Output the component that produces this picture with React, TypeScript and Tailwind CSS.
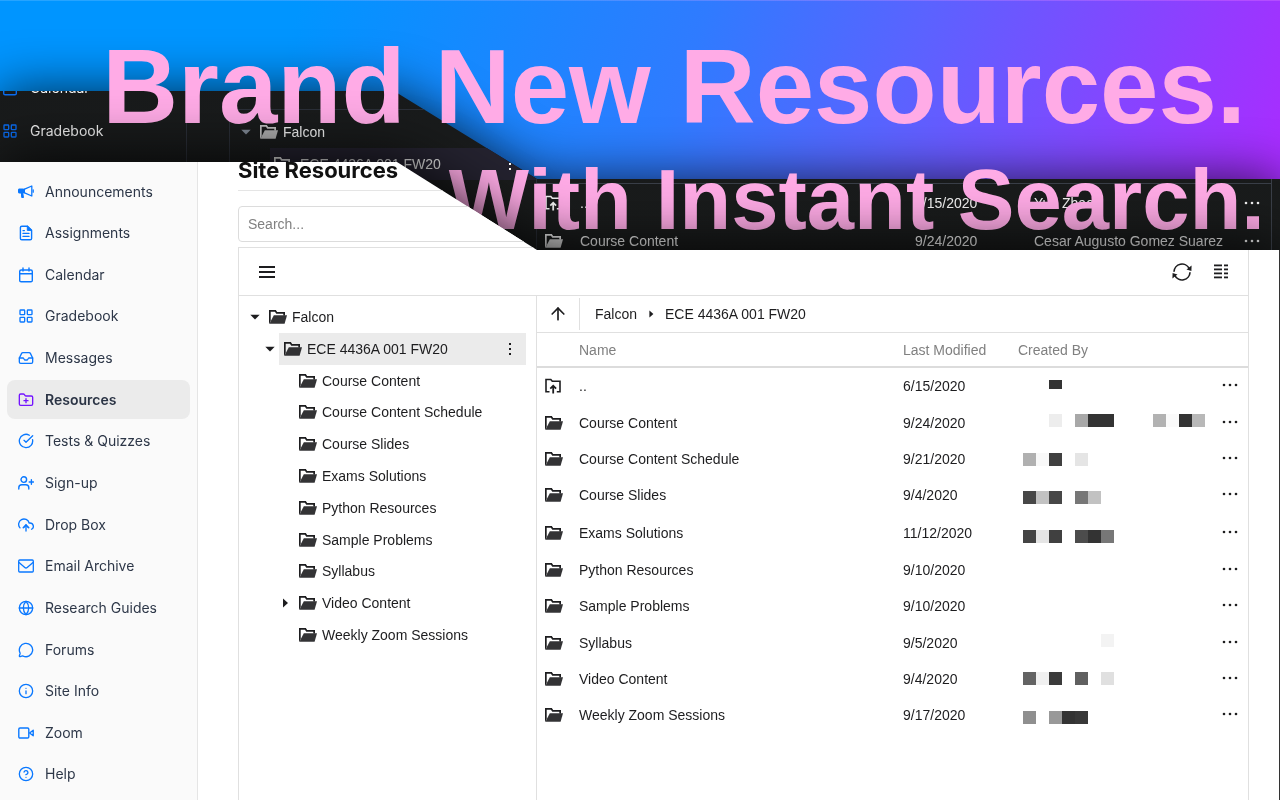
import type { ReactNode } from 'react';
import {
  LayoutGrid,
  Inbox,
  FolderPlus,
  Globe,
  MessageCircle,
  Info,
  CircleHelp,
  CircleCheckBig,
  ArrowUp,
} from 'lucide-react';
import { FiUploadCloud } from 'react-icons/fi';

const SANS = "font-['Liberation_Sans',Arial,sans-serif]";
const INTER = 'font-[Inter,sans-serif]';

function Line({ children }: { children: ReactNode }) {
  return (
    <svg viewBox="0 0 16 16" className="size-4" fill="none" stroke="currentColor" strokeWidth="1.4" strokeLinejoin="round" strokeLinecap="round">
      {children}
    </svg>
  );
}

function Megaphone() {
  return (
    <Line>
      <path d="M1 4.800h6v4.400H5l.7 4.600H3.600L2.900 9.200H1Z" fill="currentColor" stroke="none" />
      <path d="M.9 5.200h4.600v3.600H.9ZM3.300 9l.6 4.500h1.400L4.700 9" fill="currentColor" strokeWidth="1" />
      <path d="M6.600 5.200 13.800 2v10L6.600 8.800" strokeWidth="1.300" />
      <path d="M15.200 6v2.200" strokeWidth="1.300" />
    </Line>
  );
}

function Paper() {
  return (
    <Line>
      <path d="M9.500 1.200H3.800c-.8 0-1.400.6-1.400 1.400v10.800c0 .8.6 1.400 1.400 1.400h8.400c.8 0 1.400-.6 1.400-1.400V5.200Z" />
      <path d="M9.300 1.300v4.100h4.200Z" fill="currentColor" strokeWidth="1" />
      <path d="M5 5.600h1.400M5 8.400h6M5 11.400h6" strokeWidth="1.300" />
    </Line>
  );
}

function CalendarIcon() {
  return (
    <Line>
      <rect x="1.700" y="3" width="12.600" height="11.800" rx="1.400" />
      <path d="M1.700 6.700h12.600M5 1v3M11 1v3" />
    </Line>
  );
}

function PersonPlus() {
  return (
    <Line>
      <circle cx="5.800" cy="4.600" r="2.800" />
      <path d="M.8 14v-1.200a3 3 0 0 1 3-3h4a3 3 0 0 1 3 3V14M13.400 4.800v4.400M11.200 7h4.400" />
    </Line>
  );
}

function Envelope() {
  return (
    <Line>
      <rect x=".7" y="2" width="14.600" height="12" rx="1" strokeWidth="1.300" />
      <path d="m1 4.500 5.800 5c.7.6 1.700.6 2.400 0l5.800-5" strokeWidth="1.300" />
    </Line>
  );
}

function Camera() {
  return (
    <Line>
      <rect x=".8" y="3" width="10" height="10" rx="1.200" />
      <path d="m11.600 8 3.600-2.800v5.600Z" />
    </Line>
  );
}

function FolderOpen({ className = '' }: { className?: string }) {
  return (
    <svg viewBox="0 0 18 14" className={`h-[14px] w-[18px] shrink-0 ${className}`} fill="currentColor">
      <path d="M0 0h6.800l1.400 2H16v3.600h-1.700V3.700H7.300L5.900 1.700H1.700V11L0 14Z" />
      <path d="M4.800 5.300H18L15.600 13.800H.4Z" fillOpacity=".9" />
    </svg>
  );
}

function FolderUp() {
  return (
    <svg viewBox="0 0 16 16" className="size-4 shrink-0" fill="none" stroke="currentColor" strokeWidth="1.600">
      <path d="M4.500 13.700H1V1.500h4.800l1.500 1.800H15v10.400h-3.200" />
      <path d="M8.200 15.500V7.800M5.300 10.600l2.900-2.900 2.900 2.900" strokeWidth="1.800" />
    </svg>
  );
}

function Caret({ open, className = '' }: { open: boolean; className?: string }) {
  return (
    <svg viewBox="0 0 10 10" className={`shrink-0 ${className}`} fill="currentColor">
      {open ? <path d="M.3 2.700h9.400L5 7.500Z" /> : <path d="M3 .5v9L8 5Z" />}
    </svg>
  );
}

function Dots({ vertical = false }: { vertical?: boolean }) {
  return vertical ? (
    <svg viewBox="0 0 4 14" className="h-[14px] w-1" fill="currentColor">
      <rect x="1" y="1" width="2" height="2" />
      <rect x="1" y="6" width="2" height="2" />
      <rect x="1" y="11" width="2" height="2" />
    </svg>
  ) : (
    <svg viewBox="0 0 16 4" className="h-1 w-4" fill="currentColor">
      <circle cx="2" cy="2" r="1.300" />
      <circle cx="8" cy="2" r="1.300" />
      <circle cx="14" cy="2" r="1.300" />
    </svg>
  );
}

function Refresh() {
  return (
    <svg viewBox="0 0 20 18" className="h-[18px] w-5" fill="none" stroke="currentColor" strokeWidth="1.700">
      <path d="M2 8.800A8 8 0 0 1 17.200 5.600M18 9.200A8 8 0 0 1 2.800 12.400" />
      <path d="M19.600 2.600 19.400 8l-4.900-1.500ZM.4 15.400.6 10l4.900 1.500Z" fill="currentColor" stroke="none" />
    </svg>
  );
}

function ListView() {
  return (
    <svg viewBox="0 0 14 15" className="h-[15px] w-[14px]" fill="currentColor">
      {[0, 4, 8, 12].map((y) => (
        <g key={y}>
          <rect x="0" y={y + 0.5} width="8" height="1.800" />
          <rect x="10" y={y + 0.5} width="4" height="1.800" />
        </g>
      ))}
    </svg>
  );
}

const links: { label: string; icon: ReactNode; active?: boolean }[] = [
  { label: 'Announcements', icon: <Megaphone /> },
  { label: 'Assignments', icon: <Paper /> },
  { label: 'Calendar', icon: <CalendarIcon /> },
  { label: 'Gradebook', icon: <LayoutGrid className="size-4" /> },
  { label: 'Messages', icon: <Inbox className="size-4" /> },
  { label: 'Resources', icon: <FolderPlus className="size-4" />, active: true },
  { label: 'Tests & Quizzes', icon: <CircleCheckBig className="size-4" /> },
  { label: 'Sign-up', icon: <PersonPlus /> },
  { label: 'Drop Box', icon: <FiUploadCloud className="size-4" /> },
  { label: 'Email Archive', icon: <Envelope /> },
  { label: 'Research Guides', icon: <Globe className="size-4" /> },
  { label: 'Forums', icon: <MessageCircle className="size-4" /> },
  { label: 'Site Info', icon: <Info className="size-4" /> },
  { label: 'Zoom', icon: <Camera /> },
  { label: 'Help', icon: <CircleHelp className="size-4" /> },
];

const folders = [
  'Course Content',
  'Course Content Schedule',
  'Course Slides',
  'Exams Solutions',
  'Python Resources',
  'Sample Problems',
  'Syllabus',
  'Video Content',
  'Weekly Zoom Sessions',
];

// Redacted author cells: one shade per 13px block, null for a gap.
type Shades = (string | null)[];
const rows: { name: string; date: string; shades: Shades; shift: string }[] = [
  { name: '..', date: '6/15/2020', shades: [null, null, '#333333'], shift: '-mt-1' },
  {
    name: 'Course Content',
    date: '9/24/2020',
    shades: [null, null, '#ededed', null, '#a8a8a8', '#333333', '#333333', null, null, null, '#b2b2b2', '#fafafa', '#333333', '#b8b8b8'],
    shift: '-mt-1',
  },
  { name: 'Course Content Schedule', date: '9/21/2020', shades: ['#b0b0b0', '#f8f8f8', '#404040', null, '#e5e5e5'], shift: '' },
  { name: 'Course Slides', date: '9/4/2020', shades: ['#474747', '#c2c2c2', '#474747', null, '#777777', '#c2c2c2'], shift: 'mt-1' },
  { name: 'Exams Solutions', date: '11/12/2020', shades: ['#444444', '#e5e5e5', '#404040', null, '#4c4c4c', '#333333', '#777777'], shift: 'mt-2' },
  { name: 'Python Resources', date: '9/10/2020', shades: [], shift: '' },
  { name: 'Sample Problems', date: '9/10/2020', shades: [], shift: '' },
  { name: 'Syllabus', date: '9/5/2020', shades: [null, null, null, null, null, null, '#f3f3f3'], shift: '-mt-1' },
  { name: 'Video Content', date: '9/4/2020', shades: ['#636363', '#f0f0f0', '#3b3b3b', null, '#606060', null, '#e0e0e0'], shift: '' },
  { name: 'Weekly Zoom Sessions', date: '9/17/2020', shades: ['#8f8f8f', null, '#999999', '#333333', '#383838'], shift: 'mt-1' },
];

function Banner() {
  return (
    <div className="absolute inset-x-0 top-0 h-[260px] overflow-hidden border-t border-white/15 bg-[linear-gradient(108deg,#0095ff_0%,#0095ff_22%,#2f7bff_52%,#5a63ff_68%,#a62eff_97%)]">
      <div className="absolute inset-0 -top-px drop-shadow-[0_0_26px_rgba(0,0,0,0.7)]">
        <div className="flex h-full bg-[linear-gradient(#181a1b,#1a1c1c)] pt-[70px] text-[#f2f2f2] [clip-path:polygon(0_91px,394px_91px,537px_179px,100%_179px,100%_100%,0_100%)]">
          <div className={`w-[187px] shrink-0 border-r border-[#2b2f38] text-sm ${INTER}`}>
            <div className="flex h-9 items-center gap-3 pl-[2px] text-[#0a6cf0]">
              <CalendarIcon />
              <span className="text-[#f2f2f2]">Calendar</span>
            </div>
            <div className="mt-1 flex h-[42px] items-center gap-3 pl-[2px]">
              <LayoutGrid className="size-4 text-[#0a6cf0]" />
              Gradebook
            </div>
          </div>
          <div className={`ml-[42px] w-[308px] shrink-0 border-x border-[#2b2f38] pt-[39px] text-sm ${SANS}`}>
            <div className="flex h-[39px] items-center gap-[5px] border-t border-[#2b2f38] pt-[6px] pl-[11px]">
              <Caret open className="mr-1 size-[10px] text-[#7f8894]" />
              <FolderOpen className="text-[#c0c0c0]" />
              Falcon
            </div>
            <div className="ml-10 flex h-8 items-center gap-2 bg-[#24222f] pr-[24px] pl-1 text-[#e0e0e0]">
              <FolderOpen />
              ECE 4436A 001 FW20
              <span className="ml-auto text-white">
                <Dots vertical />
              </span>
            </div>
          </div>
          <div className={`mr-2 grow border-r border-[#3a3f48] pt-[113px] text-sm ${SANS}`}>
            <div className="grid grid-cols-[35px_335px_119px_1fr_auto] items-center border-t border-[#3a3f48] pr-[11px] pl-[8px] leading-[38px]">
              <FolderUp />
              <span>..</span>
              <span>6/15/2020</span>
              <span>Yue Zhao</span>
              <Dots />
              <FolderOpen />
              <span>Course Content</span>
              <span>9/24/2020</span>
              <span>Cesar Augusto Gomez Suarez</span>
              <Dots />
            </div>
          </div>
        </div>
      </div>
      <h1 className={`relative pt-[23px] pr-[15px] text-right font-bold whitespace-nowrap text-[#ffabe6] ${SANS}`}>
        <span className="block pr-[19px] text-[105px] leading-[126px]">Brand New Resources.</span>
        <span className="block text-[85px] leading-[100px]">With Instant Search.</span>
      </h1>
    </div>
  );
}

function Sidebar() {
  return (
    <nav className={`flex w-[198px] shrink-0 flex-col justify-between border-r border-[#e5e5e5] bg-[#fafafa] px-[7px] pt-[172px] pb-[6px] text-sm ${INTER}`}>
      {links.map(({ label, icon, active }) => (
        <a
          key={label}
          href="#"
          className={`flex h-[39px] items-center gap-[11px] rounded-lg pl-[11px] ${active ? 'bg-[#ebebeb] font-semibold text-[#2b3445]' : 'text-[#2d3748]'}`}
        >
          <span className={active ? 'text-[#7414ff]' : 'text-[#0a78ff]'}>{icon}</span>
          {label}
        </a>
      ))}
    </nav>
  );
}

function Tree() {
  return (
    <ul className="mt-[5px] flex h-[350px] flex-col text-sm">
      <li className="flex flex-1 items-center pl-[11px]">
        <Caret open className="size-[10px]" />
        <FolderOpen className="mr-[5px] ml-[9px]" />
        Falcon
      </li>
      <li className="mr-[10px] flex flex-1 items-center pl-[26px]">
        <Caret open className="size-[10px]" />
        <span className="ml-1 flex flex-1 items-center self-stretch bg-[#ebebeb] pr-[14px] pl-[5px]">
          <FolderOpen className="mr-[5px]" />
          ECE 4436A 001 FW20
          <button type="button" aria-label="Folder menu" className="ml-auto">
            <Dots vertical />
          </button>
        </span>
      </li>
      {folders.map((name) => (
        <li key={name} className="flex flex-1 items-center pl-[41px]">
          {name === 'Video Content' ? <Caret open={false} className="size-[10px]" /> : <span className="w-[10px]" />}
          <FolderOpen className="mr-[5px] ml-[9px]" />
          {name}
        </li>
      ))}
    </ul>
  );
}

function Files() {
  return (
    <table className="h-[401px] w-full table-fixed text-left text-sm">
      <colgroup>
        <col className="w-[42px]" />
        <col />
        <col className="w-[115px]" />
        <col className="w-[204px]" />
        <col className="w-[26px]" />
      </colgroup>
      <thead>
        <tr className="h-[34px] border-b-2 border-[#dcdcdc] text-[#808080]">
          <th />
          <th className="font-normal">Name</th>
          <th className="font-normal">Last Modified</th>
          <th className="font-normal">Created By</th>
          <th />
        </tr>
      </thead>
      <tbody>
        {rows.map(({ name, date, shades, shift }) => (
          <tr key={name}>
            <td className="pb-px pl-2">{name === '..' ? <FolderUp /> : <FolderOpen />}</td>
            <td className="pb-px">{name}</td>
            <td className="pb-px">{date}</td>
            <td className="pb-px">
              <div className={`flex pl-[5px] ${shift}`}>
                {shades.map((shade, i) => (
                  <span
                    key={i}
                    className={`w-[13px] ${name === '..' ? 'h-[9px]' : 'h-[13px]'}`}
                    style={{ backgroundColor: shade ?? 'transparent' }}
                  />
                ))}
              </div>
            </td>
            <td className="pb-[3px]">
              <button type="button" aria-label={`Actions for ${name}`} className="block">
                <Dots />
              </button>
            </td>
          </tr>
        ))}
      </tbody>
    </table>
  );
}

export default function App() {
  return (
    <div className="relative overflow-hidden bg-white">
      <Banner />
      <div className="relative drop-shadow-[0_0_30px_rgba(0,0,0,0.9)]">
        <div className="flex min-h-screen border-r border-[#333] bg-white text-[#1d1d1f] [clip-path:polygon(0_162px,397px_162px,537px_250px,100%_250px,100%_100%,0_100%)]">
          <Sidebar />
          <main className={`flex grow flex-col pr-[30px] pl-10 ${SANS}`}>
            <h2 className={`mt-[154px] border-b border-[#e5e5e5] pb-1 text-[22px] leading-8 font-bold text-[#111] ${INTER}`}>Site Resources</h2>
            <input
              type="search"
              aria-label="Search"
              placeholder="Search..."
              className="mt-[15px] h-9 w-full rounded-[4px] border border-[#dcdcdc] bg-white px-[9px] text-sm placeholder:text-[#808080]"
            />
            <section className="mt-[5px] flex grow flex-col border-x border-t border-[#e0e0e0]">
              <div className="flex h-12 items-center border-b border-[#e0e0e0] px-5">
                <button type="button" aria-label="Toggle tree">
                  <svg viewBox="0 0 16 12" className="h-3 w-4" fill="currentColor">
                    <path d="M0 0h16v2H0ZM0 5h16v2H0ZM0 10h16v2H0Z" />
                  </svg>
                </button>
                <button type="button" aria-label="Refresh" className="ml-auto">
                  <Refresh />
                </button>
                <button type="button" aria-label="Change view" className="ml-[22px]">
                  <ListView />
                </button>
              </div>
              <div className="flex grow">
                <div className="w-[298px] shrink-0 border-r border-[#e0e0e0]">
                  <Tree />
                </div>
                <div className="grow">
                  <div className="flex h-[37px] items-center border-b border-[#e0e0e0] text-sm">
                    <button type="button" aria-label="Up one level" className="flex h-8 w-[43px] items-center justify-center border-r border-[#e0e0e0]">
                      <ArrowUp className="size-5" />
                    </button>
                    <span className="ml-[15px]">Falcon</span>
                    <Caret open={false} className="mx-[10px] size-2" />
                    <span>ECE 4436A 001 FW20</span>
                  </div>
                  <Files />
                </div>
              </div>
            </section>
          </main>
        </div>
      </div>
    </div>
  );
}
